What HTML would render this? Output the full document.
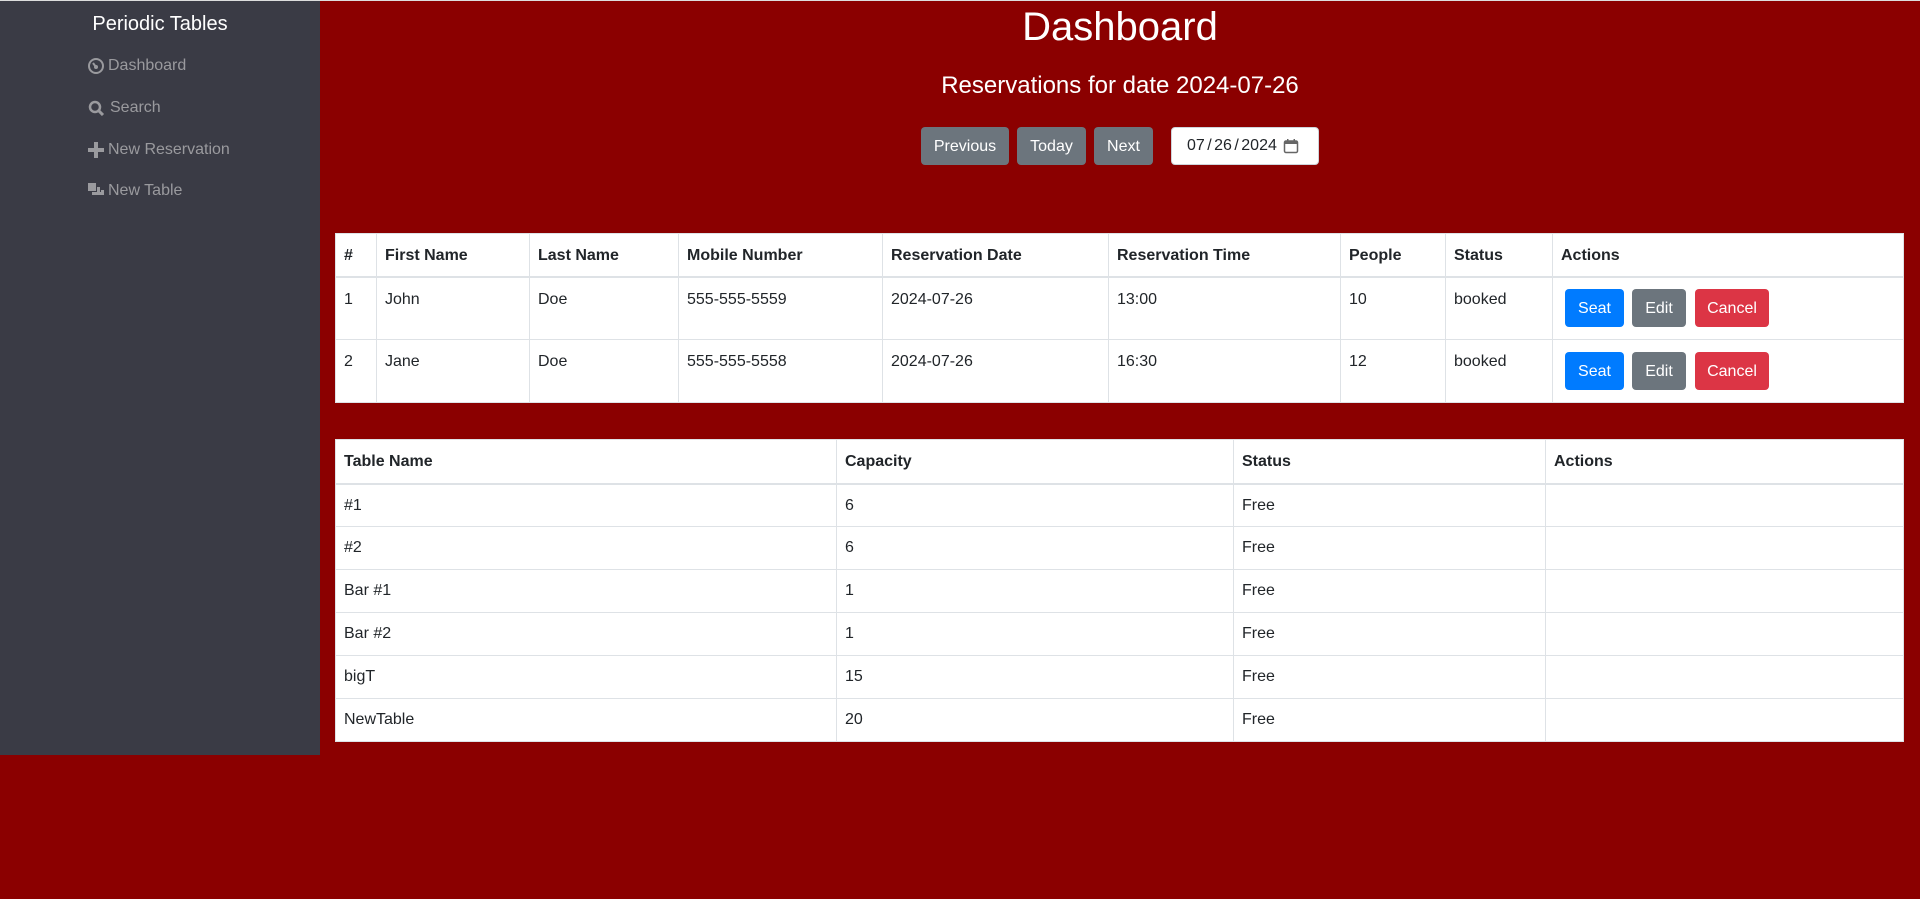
<!DOCTYPE html>
<html><head><meta charset="utf-8"><style>
*{box-sizing:border-box;margin:0;padding:0}
body{width:1920px;height:899px;background:#8b0000;font-family:"Liberation Sans",Arial,sans-serif;font-size:16px;color:#212529;position:relative;overflow:hidden}
.top{position:absolute;left:0;top:0;width:1920px;height:1px;background:#ddd}
.side{position:absolute;left:0;top:1px;width:320px;height:754px;background:#3a3b45}
.side h2{position:absolute;left:0;width:320px;text-align:center;top:12px;font-size:20px;font-weight:normal;color:#fff}
.nav{position:absolute;left:88px;color:#9a9a9e;font-size:16px;display:flex;align-items:center;gap:4px}
.nav svg{fill:#9a9a9e}
h1{position:absolute;left:320px;width:1600px;text-align:center;top:5px;font-size:40px;font-weight:normal;color:#fff}
.sub{position:absolute;left:320px;width:1600px;text-align:center;top:72px;font-size:24px;color:#fff}
.b{position:absolute;height:38px;border-radius:4px;color:#fff;font-size:16px;display:flex;align-items:center;justify-content:center;padding-top:1px}
.g{background:#6c757d}.bl{background:#007bff}.r{background:#dc3545}
.date{position:absolute;left:1171px;top:127px;width:148px;height:38px;background:#fff;border:1px solid #ced4da;border-radius:4px;font-size:16px;display:flex;align-items:center;padding-left:15px;gap:6px;color:#212529;word-spacing:-2px}
table{position:absolute;background:#fff;border-collapse:collapse;table-layout:fixed}
td,th{border:1px solid #dee2e6;padding:12px 8px 10px;text-align:left;vertical-align:top;line-height:19px}
th{font-weight:bold;border-bottom:2px solid #dee2e6}
.t2 td{padding:11px 8px 10px}
</style></head><body>
<div class="top"></div>
<div class="side">
<h2>Periodic Tables</h2>
<div class="nav" style="top:56px"><svg width="16" height="16" viewBox="0 0 16 16"><circle cx="8" cy="8" r="7" fill="none" stroke="#9a9a9e" stroke-width="2"/><circle cx="8" cy="9" r="2"/><path d="M8 9L5 5" stroke="#9a9a9e" stroke-width="2"/></svg>Dashboard</div>
<div class="nav" style="top:98px"><svg width="18" height="16" viewBox="0 0 18 16"><circle cx="7" cy="7" r="5" fill="none" stroke="#9a9a9e" stroke-width="2.5"/><path d="M10.5 10.5L15 15" stroke="#9a9a9e" stroke-width="3"/></svg>Search</div>
<div class="nav" style="top:140px"><svg width="16" height="16" viewBox="0 0 16 16"><path d="M6 0h4v6h6v4h-6v6h-4v-6h-6v-4h6z"/></svg>New Reservation</div>
<div class="nav" style="top:181px"><svg width="16" height="16" viewBox="0 0 16 16"><rect x="0" y="0" width="8" height="8"/><rect x="9" y="4" width="3" height="8"/><rect x="4" y="9" width="12" height="3"/><rect x="13" y="7" width="3" height="5"/></svg>New Table</div>
</div>
<h1>Dashboard</h1>
<div class="sub">Reservations for date 2024-07-26</div>
<div class="b g" style="left:921px;top:127px;width:88px">Previous</div>
<div class="b g" style="left:1017px;top:127px;width:69px">Today</div>
<div class="b g" style="left:1094px;top:127px;width:59px">Next</div>
<div class="date">07 / 26 / 2024 <svg width="16" height="16" viewBox="0 0 16 16"><rect x="1.5" y="3" width="13" height="11.5" rx="1.5" fill="none" stroke="#666" stroke-width="1.5"/><rect x="1.5" y="3" width="13" height="3" fill="#666"/><rect x="4" y="1" width="1.5" height="3" fill="#666"/><rect x="10.5" y="1" width="1.5" height="3" fill="#666"/></svg></div>

<table style="left:335px;top:233px;width:1569px">
<colgroup><col style="width:41px"><col style="width:153px"><col style="width:149px"><col style="width:204px"><col style="width:226px"><col style="width:232px"><col style="width:105px"><col style="width:107px"><col></colgroup>
<tr style="height:43px"><th>#</th><th>First Name</th><th>Last Name</th><th>Mobile Number</th><th>Reservation Date</th><th>Reservation Time</th><th>People</th><th>Status</th><th>Actions</th></tr>
<tr style="height:63px"><td>1</td><td>John</td><td>Doe</td><td>555-555-5559</td><td>2024-07-26</td><td>13:00</td><td>10</td><td>booked</td><td></td></tr>
<tr style="height:63px"><td>2</td><td>Jane</td><td>Doe</td><td>555-555-5558</td><td>2024-07-26</td><td>16:30</td><td>12</td><td>booked</td><td></td></tr>
</table>
<div class="b bl" style="left:1565px;top:289px;width:59px">Seat</div>
<div class="b g" style="left:1632px;top:289px;width:54px">Edit</div>
<div class="b r" style="left:1695px;top:289px;width:74px">Cancel</div>
<div class="b bl" style="left:1565px;top:352px;width:59px">Seat</div>
<div class="b g" style="left:1632px;top:352px;width:54px">Edit</div>
<div class="b r" style="left:1695px;top:352px;width:74px">Cancel</div>

<table class="t2" style="left:335px;top:439px;width:1569px">
<colgroup><col style="width:501px"><col style="width:397px"><col style="width:312px"><col></colgroup>
<tr style="height:44px"><th>Table Name</th><th>Capacity</th><th>Status</th><th>Actions</th></tr>
<tr style="height:43px"><td>#1</td><td>6</td><td>Free</td><td></td></tr>
<tr style="height:43px"><td>#2</td><td>6</td><td>Free</td><td></td></tr>
<tr style="height:43px"><td>Bar #1</td><td>1</td><td>Free</td><td></td></tr>
<tr style="height:43px"><td>Bar #2</td><td>1</td><td>Free</td><td></td></tr>
<tr style="height:43px"><td>bigT</td><td>15</td><td>Free</td><td></td></tr>
<tr style="height:43px"><td>NewTable</td><td>20</td><td>Free</td><td></td></tr>
</table>
</body></html>
